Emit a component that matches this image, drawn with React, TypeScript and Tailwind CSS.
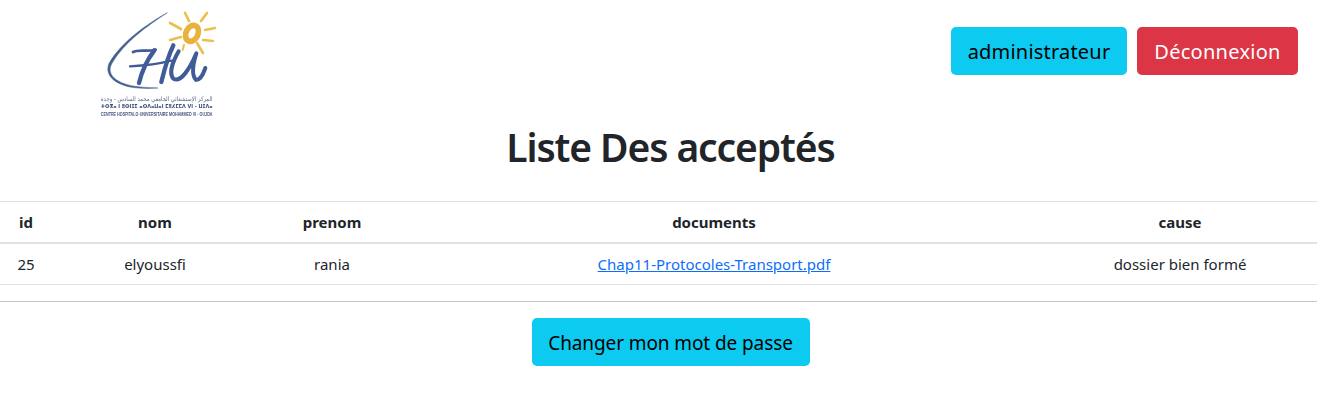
const font = { fontFamily: '"Noto Sans", "Open Sans", sans-serif' };

function Logo() {
  return (
    <svg width="140" height="125" viewBox="0 0 420 375" className="block overflow-visible" style={{ filter: "blur(0.5px)" }}>
      {/* swoosh */}
      <path d="M232 38C170 72 95 125 58 188C42 222 70 252 125 262C150 266 178 266 204 264C170 262 140 262 112 254C70 242 50 218 66 190C100 130 170 78 232 38Z" fill="#45608f" stroke="#45608f" strokeWidth="1.5" />
      {/* sun */}
      <g fill="none" stroke="#ecc04f" strokeLinecap="round">
        <ellipse cx="306" cy="100" rx="18" ry="25" strokeWidth="17" stroke="#e8b23c" transform="rotate(25 306 100)" />
        <path d="M285 39L297 63" strokeWidth="8" />
        <path d="M351 39L333 63" strokeWidth="8" />
        <path d="M240 69L273 87" strokeWidth="8" />
        <path d="M345 90L375 84" strokeWidth="7" />
        <path d="M240 120L273 111" strokeWidth="8" />
        <path d="M339 120L369 123" strokeWidth="7" />
        <path d="M321 129L339 159" strokeWidth="8" />
        <path d="M282 134L278 150" strokeWidth="6" />
      </g>
      {/* H U */}
      <g fill="none" stroke="#3f5b98" strokeLinecap="round">
        <path d="M129 156C145 147 170 156 197 149" strokeWidth="8" />
        <path d="M193 151C172 178 156 212 147 249" strokeWidth="13" />
        <path d="M120 199C160 197 205 192 244 182" strokeWidth="7" />
        <path d="M250 136C236 165 224 205 214 246" strokeWidth="13" />
        <path d="M266 154C248 185 236 220 250 236C272 250 300 205 319 160C308 195 304 225 318 240C330 240 340 222 346 204" strokeWidth="12" strokeLinejoin="round" />
      </g>
      {/* lettering under the mark */}
      <text x="200" y="302" textAnchor="middle" textLength="335" lengthAdjust="spacingAndGlyphs" fontSize="19" fill="#5a6a8c" fontFamily='"DejaVu Sans", sans-serif' direction="rtl">المركز الإستشفائي الجامعي محمد السادس - وجدة</text>
      <text x="200" y="324" textAnchor="middle" textLength="335" lengthAdjust="spacingAndGlyphs" fontSize="16" fontWeight="700" fill="#3f4f78" fontFamily='"DejaVu Sans", sans-serif'>ⵜⵙⴳⴰ ⵏ ⵓⵙⵏⵊⵉ ⴰⵙⴷⴰⵡⴰⵏ ⵎⵓⵃⵎⵎⴷ VI - ⵡⵊⴷⴰ</text>
      <text x="200" y="349" textAnchor="middle" textLength="335" lengthAdjust="spacingAndGlyphs" fontSize="15" fontWeight="700" fill="#46567f" fontFamily='"Liberation Sans", sans-serif'>CENTRE HOSPITALO-UNIVERSITAIRE MOHAMMED VI - OUJDA</text>
    </svg>
  );
}

export default function App() {
  return (
    <div className="min-h-[414px] bg-white text-[#212529]" style={font}>
      <header className="flex items-start justify-between h-[125px] pl-[90px] pr-[19px]">
        <Logo />
        <div className="flex gap-[10px] pt-[27px]">
          <button className="h-[48px] w-[176px] pt-[1px] rounded-[5px] bg-[#0dcaf0] text-[#000] text-[20px] tracking-[0.2px]">administrateur</button>
          <button className="h-[48px] w-[161px] pt-[1px] rounded-[5px] bg-[#dc3545] text-white text-[20px] tracking-[0.27px]">Déconnexion</button>
        </div>
      </header>
      <h1 className="text-center text-[39px] leading-[48px] font-semibold tracking-[-1.1px] pl-[24px] mt-[-2px] mb-[30px]">Liste Des acceptés</h1>
      <table className="w-full table-fixed border-collapse text-[15px] text-center">
        <colgroup>
          <col className="w-[52px]" />
          <col className="w-[206px]" />
          <col className="w-[148px]" />
          <col className="w-[616px]" />
          <col />
        </colgroup>
        <thead>
          <tr className="h-[41px] border-t border-b-2 border-t-[#dee2e6] border-b-[#dee2e6] font-bold">
            <th>id</th>
            <th>nom</th>
            <th>prenom</th>
            <th>documents</th>
            <th className="pl-[21px]">cause</th>
          </tr>
        </thead>
        <tbody>
          <tr className="h-[42px] border-b border-[#dee2e6]">
            <td>25</td>
            <td>elyoussfi</td>
            <td>rania</td>
            <td><a href="#" className="text-[#0d6efd] underline">Chap11-Protocoles-Transport.pdf</a></td>
            <td className="pl-[21px]">dossier bien formé</td>
          </tr>
        </tbody>
      </table>
      <hr className="mt-4 border-t border-[#c8c8c8]" />
      <div className="flex justify-center pt-4 pl-[24px]">
        <button className="h-[48px] w-[278px] pt-[2px] rounded-[5px] bg-[#0dcaf0] text-[#000] text-[19px] tracking-[-0.1px]">Changer mon mot de passe</button>
      </div>
    </div>
  );
}
